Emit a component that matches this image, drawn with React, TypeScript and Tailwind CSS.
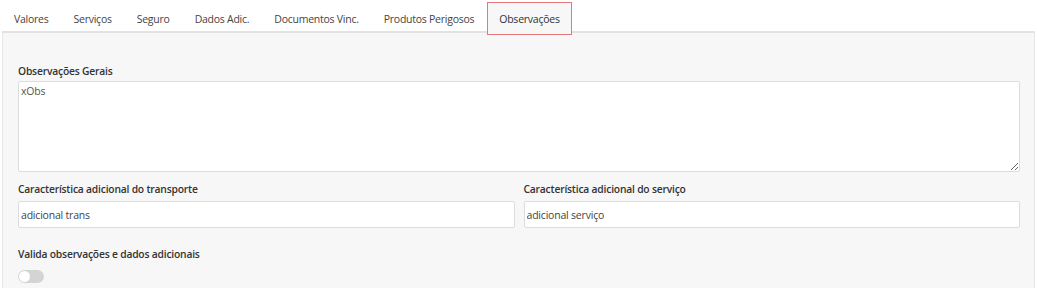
import React from "react";

const tabs = ["Valores", "Serviços", "Seguro", "Dados Adic.", "Documentos Vinc.", "Produtos Perigosos", "Observações"];

function Field({ label, value }: { label: string; value: string }) {
  return (
    <div className="min-w-0">
      <div className="font-semibold text-[10.3px] tracking-[-0.2px] mb-[3px] leading-[17px] text-[#333]">{label}</div>
      <input
        defaultValue={value}
        className="block w-full h-[27px] bg-white border border-[#dcdcdc] rounded-[2px] px-[2px] text-[10.5px] tracking-[-0.2px] text-[#444] outline-none font-['Open_Sans',sans-serif]"
      />
    </div>
  );
}

export default function App() {
  return (
    <div className="w-[1037px] h-[290px] bg-white overflow-hidden text-[10.5px] tracking-[-0.2px] text-[#333] font-['Open_Sans',sans-serif]">
      <div className="flex gap-[1px] pt-[2px] h-[33px] border-b-2 border-[#e3e3e3] mx-[2px] tracking-[-0.25px]">
        {tabs.map((t, i) =>
          i === tabs.length - 1 ? (
            <div key={t} className="h-[33px] px-[11px] pt-[2px] flex items-center border border-[#e8767a] bg-[#f7f7f7] text-[#333] -mb-[2px]">
              {t}
            </div>
          ) : (
            <div key={t} className="h-[31px] px-[11px] pt-[4px] flex items-center border border-transparent text-[#444]">
              {t}
            </div>
          )
        )}
      </div>
      <div className="mx-[2px] bg-[#f7f7f7] border-x border-[#e6e6e6] pl-[15px] pr-[14px] pt-[30px] h-[255px]">
        <div className="font-semibold text-[10.3px] mb-[1px] leading-[17px]">Observações Gerais</div>
        <textarea
          defaultValue="xObs"
          className="block w-full h-[91px] bg-white border border-[#dcdcdc] rounded-[2px] px-[2px] py-[2px] text-[10.5px] tracking-[-0.2px] text-[#555] outline-none font-['Open_Sans',sans-serif]"
        />
        <div className="grid grid-cols-2 gap-[9px] mt-[9px]">
          <Field label="Característica adicional do transporte" value="adicional trans" />
          <Field label="Característica adicional do serviço" value="adicional serviço" />
        </div>
        <div className="font-semibold text-[10.3px] mt-[18px] leading-[17px]">Valida observações e dados adicionais</div>
        <div className="mt-[7px] w-[26px] h-[13px] rounded-full bg-[#d4d4d4] relative">
          <div className="absolute left-[1px] top-[1px] w-[11px] h-[11px] rounded-full bg-white" />
        </div>
      </div>
    </div>
  );
}
